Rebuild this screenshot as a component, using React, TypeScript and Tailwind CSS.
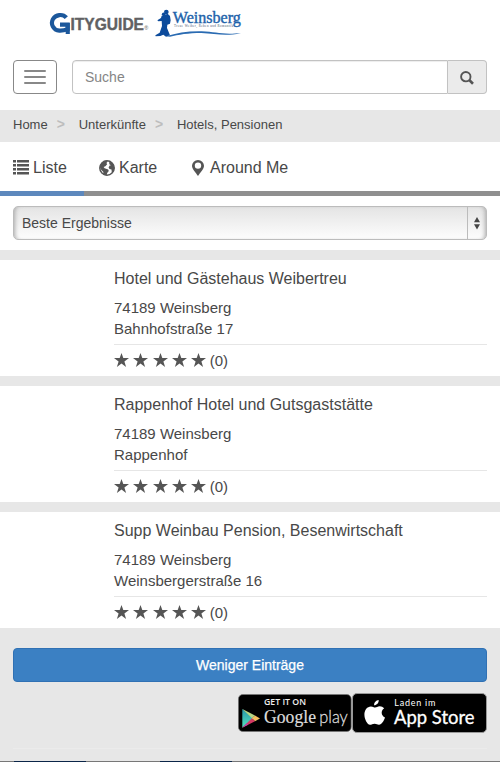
import React from 'react';

interface Hotel {
  name: string;
  city: string;
  street: string;
  reviews: number;
}

const hotels: Hotel[] = [
  { name: 'Hotel und Gästehaus Weibertreu', city: '74189 Weinsberg', street: 'Bahnhofstraße 17', reviews: 0 },
  { name: 'Rappenhof Hotel und Gutsgaststätte', city: '74189 Weinsberg', street: 'Rappenhof', reviews: 0 },
  { name: 'Supp Weinbau Pension, Besenwirtschaft', city: '74189 Weinsberg', street: 'Weinsbergerstraße 16', reviews: 0 },
];

const CityguideLogo = () => (
  <svg width="102" height="28" viewBox="0 0 102 28" className="block" fontFamily="'Liberation Sans', sans-serif">
    <g transform="translate(-9 -8) scale(0.3333)">
      <path d="M79 53 C68 40 47 44 39 57 C31 71 39 91 58 92 C66 92.5 74 91 83 88 V74 H60" fill="none" stroke="#1b579b" strokeWidth="12.5" />
      <path d="M77 69 H89.5 V102 H77 Z" fill="#1b579b" />
    </g>
    <text x="21.5" y="21.5" fontSize="16.2" fontWeight="700" fill="#616163" stroke="#616163" strokeWidth="0.4" textLength="73.5" lengthAdjust="spacingAndGlyphs">ITYGUIDE</text>
    <text x="95.3" y="21.5" fontSize="5.5" fill="#616163">®</text>
  </svg>
);

const WeinsbergLogo = () => (
  <svg width="88" height="30" viewBox="0 0 88 30" className="block" fontFamily="'Liberation Serif', serif">
    <g transform="translate(-5 -4) scale(0.3333)" fill="#0c4b9c">
      <circle cx="49" cy="24" r="7" />
      <circle cx="41" cy="31" r="5.5" />
      <path d="M42 34 L53 29 L60 36 L62 49 L60 59 L52 62 L51 72 L60 94 L48 98 L40 92 L31 96 L17 97 L16 94 L29 86 L36 66 L35 51 L25 52 L22 49 L33 42 L35 35 Z" />
      <path d="M48 97 C80 87 115 81 155 82 C199 83 218 94 273 87 C223 99 196 88 154 87 C115 87 85 92 60 98 Z" fill="#2a6bb2" />
    </g>
    <text x="17.8" y="15" fontSize="16" fill="#2162aa" stroke="#2162aa" strokeWidth="0.4" textLength="68" lengthAdjust="spacingAndGlyphs">Weinsberg</text>
    <text x="19" y="19.2" fontSize="3.2" fill="#44546a" textLength="59" lengthAdjust="spacing">Treue Weiber, Reben und Romantik</text>
  </svg>
);

const ListIcon = () => (
  <svg width="16" height="15" viewBox="0 0 16 15" fill="#555" className="block">
    <path d="M0 0h3v2.6H0zM0 4h3v2.6H0zM0 8h3v2.6H0zM0 12h3v2.6H0zM4 0h12v2.6H4zM4 4h12v2.6H4zM4 8h12v2.6H4zM4 12h12v2.6H4z" />
  </svg>
);

const GlobeIcon = () => (
  <svg width="16" height="16" viewBox="0 0 16 16" className="block">
    <circle cx="8" cy="8" r="7.2" fill="#fff" stroke="#555" strokeWidth="1.5" />
    <path d="M0.8 6 L3 2.4 L7 0.6 L8.8 1.4 L7.4 3 L8.2 4.2 L6.4 6.2 L4.6 7 L5.6 8.2 L9.2 9.6 L9.8 11 L8.2 13 L7.6 15.4 L4 14.4 L4.4 12 L2.4 10 L1.2 8 Z" fill="#555" />
    <path d="M10.2 1 L14 3.6 L15.4 8 L14.5 11.2 L12.8 12.6 L12.5 9.6 L10.5 9 L9.6 7.4 L10.6 5.6 L12 5.2 L10.3 4.2 Z" fill="#555" />
  </svg>
);

const MarkerIcon = () => (
  <svg width="12" height="16" viewBox="0 0 12 16" className="block">
    <path fillRule="evenodd" d="M6 0 A6 5.8 0 0 1 12 5.8 C12 9 8.4 12.6 6 16 C3.6 12.6 0 9 0 5.8 A6 5.8 0 0 1 6 0 Z M6 2.4 A3.2 3.2 0 1 0 6 8.8 A3.2 3.2 0 1 0 6 2.4 Z" fill="#555" />
  </svg>
);

const SearchIcon = () => (
  <svg width="14" height="14" viewBox="0 0 14 14" fill="none" stroke="#555" className="block">
    <circle cx="5.8" cy="5.7" r="4.7" strokeWidth="1.9" />
    <path d="M9.2 9 L13 12.7" strokeWidth="2.6" />
  </svg>
);

const StarIcon = () => (
  <svg width="15" height="14" viewBox="0 0 15 14" fill="#555" className="block">
    <path d="M7.5 0 L9.3 5.1 H15 L10.4 8.4 L12.1 14 L7.5 10.6 L2.9 14 L4.6 8.4 L0 5.1 H5.7 Z" />
  </svg>
);

const HotelCard: React.FC<{ hotel: Hotel }> = ({ hotel }) => (
  <article className="h-[116px] bg-white pl-[114px] pr-[13px] pt-2">
    <h2 className="text-[16px] leading-[22px]">{hotel.name}</h2>
    <div className="mt-[7px] text-[15px] leading-[21px]">
      <p>{hotel.city}</p>
      <p>{hotel.street}</p>
    </div>
    <div className="mt-[5px] flex h-[31px] items-center border-t border-[#e6e6e6] text-[15px]">
      <div className="flex gap-[4.3px]">
        {[1, 2, 3, 4, 5].map((n) => (
          <StarIcon key={n} />
        ))}
      </div>
      <span className="ml-[3.5px] pt-[2px]">({hotel.reviews})</span>
    </div>
  </article>
);

const GooglePlayBadge = () => (
  <svg width="114" height="38" viewBox="0 0 114 38" className="block">
    <defs>
      <linearGradient id="play" x1="0" y1="0" x2="0" y2="1">
        <stop offset="0" stopColor="#2897aa" />
        <stop offset="1" stopColor="#54e2bd" />
      </linearGradient>
    </defs>
    <rect x="0.4" y="0.5" width="112.8" height="37" rx="4.5" fill="#000" stroke="#777" strokeWidth="0.7" />
    <path d="M4.3 15 L15.5 24.5 L4.3 33.8 Z" fill="url(#play)" />
    <path d="M4.3 15 L17 21.6 L14 24.3 Z" fill="#b5d786" />
    <path d="M17 21.6 L22 24.5 L17 27.3 L13.8 24.3 Z" fill="#f5bf60" />
    <path d="M4.3 33.8 L17 27.3 L13.8 24.3 Z" fill="#d33963" />
    <path d="M4.3 33.8 L10 30.8 L8.8 29 Z" fill="#b944a5" />
    <text x="26" y="10.8" fill="#eee" fontFamily="'Open Sans', sans-serif" fontSize="8" fontWeight="600" textLength="42" lengthAdjust="spacingAndGlyphs">GET IT ON</text>
    <text x="26" y="29" fill="#ddd" stroke="#ddd" strokeWidth="0.2" fontFamily="'Liberation Serif', serif" fontSize="19" textLength="52" lengthAdjust="spacingAndGlyphs">Google</text>
    <text x="81.3" y="29" fill="#ddd" stroke="#ddd" strokeWidth="0.3" fontFamily="Lato, sans-serif" fontSize="17.5" fontWeight="300" textLength="28.5" lengthAdjust="spacingAndGlyphs">play</text>
  </svg>
);

const AppStoreBadge = () => (
  <svg width="135" height="40" viewBox="0 0 135 40" className="block">
    <rect x="0.5" y="0.5" width="134" height="39" rx="4.5" fill="#000" stroke="#999" strokeWidth="1" />
    <path d="M26.7 7 C26.9 9.8 24.7 12.2 22.1 12.3 C21.8 9.6 24.2 7.2 26.7 7 Z" fill="#fff" />
    <path d="M32.2 15.2 C28.5 17.5 29 22.7 33 24.4 C32 27.5 29.6 31.6 27.1 31.7 C25.3 31.8 24.8 30.7 22.6 30.7 C20.4 30.7 19.7 31.7 18 31.8 C15.1 31.9 12.4 25.9 12.4 21.6 C12.4 16.8 15.3 13.5 18.9 13.4 C20.8 13.4 21.8 14.5 23.1 14.5 C24.4 14.5 25.6 13.2 27.8 13.2 C29.3 13.2 31 14 32.2 15.2 Z" fill="#fff" />
    <text x="42.3" y="13.2" fill="#fff" fontFamily="Lato, sans-serif" fontSize="9" textLength="41" lengthAdjust="spacing">Laden im</text>
    <text x="42" y="31.3" fill="#fff" stroke="#fff" strokeWidth="0.3" fontFamily="Lato, sans-serif" fontSize="18.5" textLength="80.5" lengthAdjust="spacingAndGlyphs">App Store</text>
  </svg>
);

const App: React.FC = () => {
  return (
    <div className="flex h-[762px] w-[500px] flex-col overflow-hidden bg-[#e7e7e7] font-['Liberation_Sans',sans-serif] text-[#484848]">
      {/* Header */}
      <header className="h-[110px] shrink-0 bg-white">
        <div className="flex h-[60px] items-start gap-[4px] pl-[49px] pt-[8px]">
          <CityguideLogo />
          <WeinsbergLogo />
        </div>
        <div className="flex pl-[13px] pr-[13px]">
          <button aria-label="Menu" className="mr-[15px] flex h-[34px] w-[44px] flex-col items-center justify-center gap-[4px] rounded border border-[#888]">
            <span className="h-[2px] w-[22px] rounded-[1px] bg-[#888]" />
            <span className="h-[2px] w-[22px] rounded-[1px] bg-[#888]" />
            <span className="h-[2px] w-[22px] rounded-[1px] bg-[#888]" />
          </button>
          <input
            type="text"
            placeholder="Suche"
            className="h-[34px] min-w-0 flex-1 rounded-l border border-[#c2c2c2] px-3 text-[14px] shadow-[inset_0_1px_1px_rgba(0,0,0,0.075)] outline-none placeholder:text-[#858585]"
          />
          <button aria-label="Suche" className="flex h-[34px] w-[39px] items-center justify-center rounded-r border border-l-0 border-[#c2c2c2] bg-[#ebebeb] pt-[2px]">
            <SearchIcon />
          </button>
        </div>
      </header>

      {/* Breadcrumb */}
      <nav className="flex h-8 shrink-0 items-center pb-[2px] pl-[13px] text-[13px]">
        <a>Home</a>
        <span className="ml-[9px] w-[22px] pb-[2px] text-[14px] leading-none font-bold text-[#bdbdbd]">&gt;</span>
        <a>Unterkünfte</a>
        <span className="ml-[9px] w-[22px] pb-[2px] text-[14px] leading-none font-bold text-[#bdbdbd]">&gt;</span>
        <a>Hotels, Pensionen</a>
      </nav>

      {/* Tabs */}
      <div className="flex h-[49px] shrink-0 items-center bg-white pt-[2px] text-[16px]">
        <a className="flex w-[84px] items-center gap-[4px] pl-[13px]"><ListIcon />Liste</a>
        <a className="flex w-[108px] items-center gap-[4px] pl-[15px]"><GlobeIcon />Karte</a>
        <a className="flex items-center gap-[6px]"><MarkerIcon />Around Me</a>
      </div>
      <div className="h-[5px] shrink-0 bg-[#8f8f8f]">
        <div className="h-full w-[84px] bg-[#5d88bd]" />
      </div>

      {/* Sorting */}
      <div className="h-[54px] shrink-0 bg-white px-[13px] pt-[10px]">
        <div className="flex h-[34px] rounded-[5px] border border-[#bcbcbc] bg-linear-to-b from-[#e4e4e4] to-[#fdfdfd] text-[14px] shadow-[inset_4px_0_4px_-3px_#aaa,inset_-4px_0_4px_-3px_#aaa]">
          <span className="flex flex-1 items-center pl-2">Beste Ergebnisse</span>
          <span className="flex w-[19px] items-center justify-center border-l border-[#bcbcbc]">
            <svg width="6" height="13" viewBox="0 0 6 13" fill="#454545">
              <path d="M3 0 L6 5.3 H0 Z M0 7.3 H6 L3 12.6 Z" />
            </svg>
          </span>
        </div>
      </div>

      {/* Results */}
      <main className="flex shrink-0 flex-col gap-[10px] pt-[10px]">
        {hotels.map((hotel) => (
          <HotelCard key={hotel.name} hotel={hotel} />
        ))}
      </main>

      {/* Footer */}
      <footer className="h-[133px] shrink-0 px-[13px] pt-5">
        <button className="block h-[34px] w-full rounded border border-[#3071b4] bg-[#3b80c3] text-[14px] text-white [-webkit-text-stroke:0.25px_white]">
          Weniger Einträge
        </button>
        <div className="mt-[11px] flex items-center justify-end">
          <GooglePlayBadge />
          <AppStoreBadge />
        </div>
        <div className="mt-[15px] h-px bg-[#ebebeb]" />
      </footer>
      <div className="flex h-px shrink-0 bg-[#777] pl-[14px]">
        <span className="w-[72px] bg-[#0b2548]" />
        <span className="ml-[74px] w-[72px] bg-[#0b2548]" />
      </div>
    </div>
  );
};

export default App;
